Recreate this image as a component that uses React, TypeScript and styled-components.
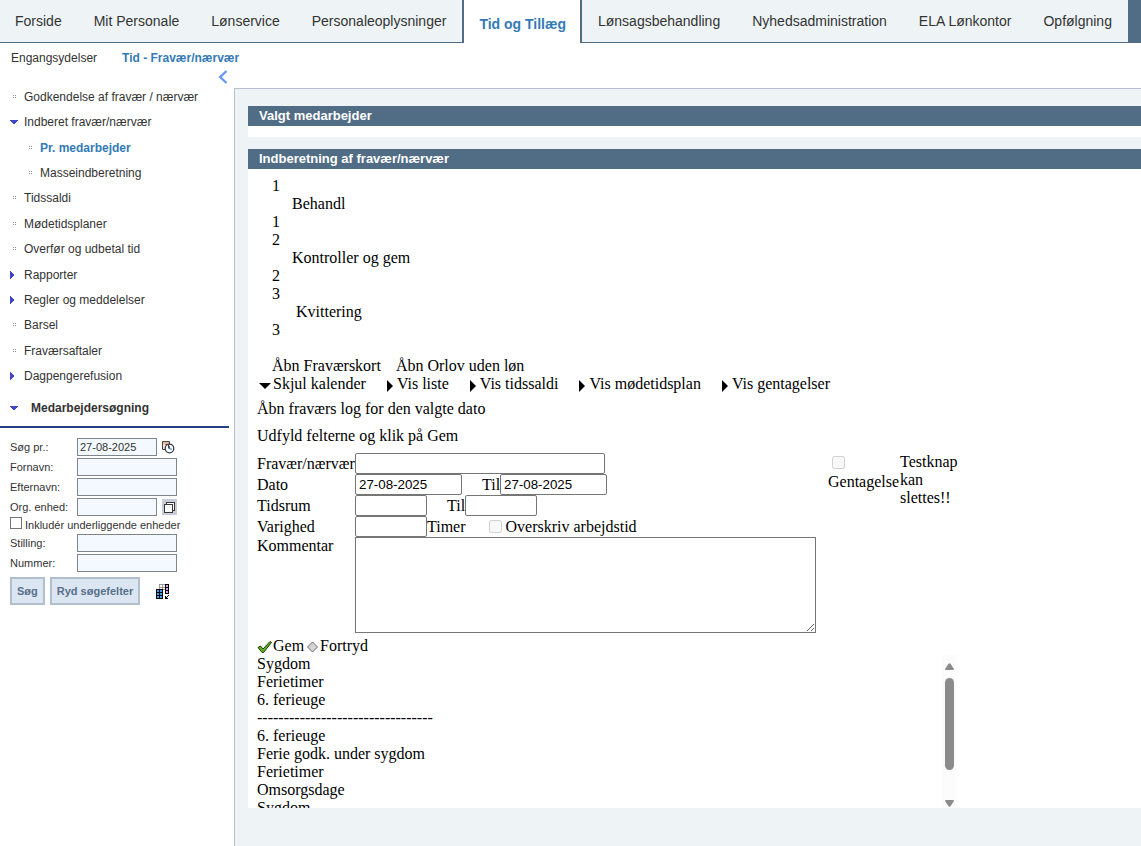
import React from "react";
import styled, { createGlobalStyle, css } from "styled-components";

const slate = "#506d85";
const pale = "#eef3f6";
const link = "#337ab7";
const sans = '"Liberation Sans", Arial, sans-serif';
const serif = '"Liberation Serif", "Times New Roman", serif';

const Global = createGlobalStyle`
  *, *::before, *::after { box-sizing: border-box; }
  body { margin: 0; background: #fff; color: #333; font: 12px/18px ${sans}; }
  a { color: inherit; text-decoration: none; }
  ul, ol { list-style: none; margin: 0; padding: 0; }
  svg { display: block; flex: none; }
  input, textarea, button { margin: 0; }
`;

const Page = styled.div`
  display: flex;
  flex-direction: column;
  min-height: 100vh;
  overflow-x: hidden;
`;

const TopBar = styled.nav`
  display: flex;
  height: 43px;
  background: ${slate};
`;

const Tabs = styled.ul`
  display: flex;
`;

const Tab = styled.li<{ $active?: boolean }>`
  padding: 0 16px;
  border-bottom: 1px solid ${slate};
  background: ${pale};
  font-size: 14px;
  line-height: 42px;
  white-space: nowrap;
  &:first-child {
    padding-left: 15px;
  }
  ${(p) =>
    p.$active &&
    css`
      padding: 3px 14px 0 15px;
      background: #fff;
      color: ${link};
      font-weight: bold;
      border: solid ${slate};
      border-width: 0 2px;
    `}
`;

const SubNav = styled.nav`
  display: flex;
  gap: 25px;
  height: 27px;
  padding: 6px 11px 0;
`;

const SubLink = styled.a<{ $active?: boolean }>`
  ${(p) => p.$active && `color: ${link}; font-weight: bold;`}
`;

const Body = styled.div`
  display: flex;
  flex: 1;
`;

const Sidebar = styled.aside`
  flex: 0 0 234px;
`;

const Collapse = styled.button`
  display: block;
  width: 10px;
  height: 14px;
  margin-left: 218px;
  padding: 0;
  border: 0;
  background: none;
`;

const Menu = styled.ul`
  display: grid;
  grid-auto-rows: 1fr;
  height: 305px;
`;

const MenuItem = styled.li<{ $sub?: boolean; $active?: boolean }>`
  display: flex;
  align-items: center;
  padding-left: ${(p) => (p.$sub ? 26 : 10)}px;
  ${(p) => p.$active && `color: ${link}; font-weight: bold;`}
`;

const Bullet = styled.span`
  width: 14px;
`;

const SearchTitle = styled.h2`
  display: flex;
  align-items: center;
  gap: 13px;
  width: 229px;
  height: 39px;
  margin: 0;
  padding-left: 10px;
  border-bottom: 2px solid #273f85;
  font-size: 12px;
`;

const SearchForm = styled.form`
  padding: 9px 10px;
  font-size: 11px;
  line-height: 16px;
`;

const SearchRow = styled.div`
  display: flex;
  align-items: center;
  height: 20px;
`;

const SearchLabel = styled.label`
  width: 67px;
`;

const SearchInput = styled.input<{ $short?: boolean }>`
  width: ${(p) => (p.$short ? 80 : 100)}px;
  height: 18px;
  padding: 1px 2px;
  border: 1px solid #7e858c;
  background: #f4f8ff;
  color: #333;
  font: 11px ${sans};
`;

const IconButton = styled.button<{ $filled?: boolean }>`
  display: grid;
  place-items: center;
  width: ${(p) => (p.$filled ? 15 : 13)}px;
  height: 16px;
  margin-left: 5px;
  padding: 0;
  border: 0;
  background: ${(p) => (p.$filled ? "#c8cddb" : "none")};
`;

const CheckRow = styled.label`
  display: flex;
  align-items: flex-start;
  gap: 3px;
  height: 16px;
  white-space: nowrap;
`;

const SquareCheck = styled.input`
  appearance: none;
  flex: none;
  width: 12px;
  height: 12px;
  border: 1px solid #767676;
  background: #fff;
`;

const Buttons = styled.div`
  display: flex;
  align-items: center;
  gap: 5px;
  padding-top: 4px;
`;

const Button = styled.button`
  height: 28px;
  padding: 0 5px;
  border: 2px solid #b2bfce;
  background: #dce5f2;
  color: #587089;
  font: bold 11px ${sans};
`;

const GridButton = styled(IconButton)`
  width: 14px;
  margin-left: 11px;
`;

const Main = styled.main`
  flex: 1;
  min-width: 0;
  margin-top: 18px;
  padding: 17px 0 38px 13px;
  border: solid #b8bfcf;
  border-width: 1px 0 0 1px;
  background: ${pale};
`;

const Panel = styled.section`
  background: #fff;
  & + & {
    margin-top: 12px;
  }
`;

const PanelTitle = styled.h2`
  margin: 0;
  padding: 0 11px;
  background: ${slate};
  color: #fff;
  font: bold 13px/20px ${sans};
`;

const EmptyBody = styled.div`
  height: 11px;
`;

const Content = styled.div`
  padding: 8px 9px 0;
  color: #000;
  font: 16px/18px ${serif};
`;

const Steps = styled.ol`
  padding: 0 0 18px 15px;
`;

const StepName = styled.div<{ $last?: boolean }>`
  padding-left: ${(p) => (p.$last ? 24 : 20)}px;
`;

const CardLinks = styled.div`
  display: flex;
  gap: 15px;
  padding-left: 15px;
`;

const Toggles = styled.div`
  display: flex;
  gap: 21px;
  padding-left: 2px;
`;

const Toggle = styled.a<{ $open?: boolean }>`
  display: flex;
  align-items: center;
  gap: ${(p) => (p.$open ? 2 : 4)}px;
  svg {
    margin-top: 3px;
  }
`;

const Line = styled.p<{ $gap: number }>`
  margin: ${(p) => p.$gap}px 0 0;
`;

const FormArea = styled.form`
  display: flex;
  width: 700px;
  margin-top: 8px;
`;

const Fields = styled.div`
  flex: 1;
`;

const Row = styled.div`
  display: flex;
  align-items: center;
  min-height: 21px;
`;

const CommentRow = styled(Row)`
  align-items: flex-start;
`;

const Label = styled.label`
  width: 98px;
  white-space: nowrap;
`;

const Till = styled.label`
  margin-left: 20px;
  width: 18px;
`;

const sizes = { long: 250, date: 107, time: 72 };

const Field = styled.input<{ $size: keyof typeof sizes }>`
  width: ${(p) => sizes[p.$size]}px;
  height: 21px;
  padding: 1px 3px;
  border: 1px solid #767676;
  border-radius: 2px;
  background: #fff;
  color: #000;
  font-family: ${sans};
`;

const Comment = styled.textarea`
  display: block;
  width: 461px;
  height: 96px;
  border: 1px solid #767676;
  background: #fff;
`;

const Override = styled.label`
  display: flex;
  align-items: center;
  gap: 4px;
  margin-left: 23px;
`;

const Repeat = styled.label`
  display: flex;
  flex-direction: column;
  gap: 4px;
  width: 72px;
  padding-top: 3px;
`;

const RoundCheck = styled.input`
  width: 13px;
  height: 13px;
  flex: none;
  ${Repeat} & {
    margin-left: 4px;
  }
`;

const TestNote = styled.div`
  width: 57px;
`;

const Actions = styled.div`
  display: flex;
  margin-top: 4px;
`;

const Action = styled.button`
  display: flex;
  align-items: center;
  padding: 0 1px 0 0;
  border: 0;
  background: none;
  color: #000;
  font: 16px/18px ${serif};
  svg {
    margin-top: 2px;
  }
`;

const ScrollBox = styled.div`
  display: flex;
  justify-content: space-between;
  width: 700px;
  height: 153px;
  overflow: hidden;
`;

const ScrollTrack = styled.div`
  display: flex;
  flex-direction: column;
  align-items: center;
  justify-content: space-between;
  width: 15px;
  padding: 8px 0 1px;
  background: #fcfcfc;
`;

const Thumb = styled.div`
  width: 9px;
  height: 92px;
  margin: 8px 0 auto;
  border-radius: 5px;
  background: #8b8b8b;
`;

type Kind = "dots" | "down" | "right";

const Marker = ({ kind }: { kind: Kind }) =>
  kind === "dots" ? (
    <svg width="9" height="4" viewBox="0 0 9 4" shapeRendering="crispEdges">
      <path d="M3 0h1v1h-1zM5 0h1v1h-1zM3 2h1v1h-1zM5 2h1v1h-1z" fill="#8b8fa8" />
    </svg>
  ) : kind === "down" ? (
    <svg width="8" height="4" viewBox="0 0 8 4" shapeRendering="crispEdges">
      <path d="M0 0h8v1H7v1H6v1H5v1H3V3H2V2H1V1H0z" fill="#4146c9" />
    </svg>
  ) : (
    <svg width="8" height="8" viewBox="0 0 8 8" shapeRendering="crispEdges">
      <path d="M0 0h1v1h1v1h1v1h1v2H3v1H2v1H1v1H0z" fill="#4146c9" />
    </svg>
  );

const BlackArrow = ({ open }: { open?: boolean }) =>
  open ? (
    <svg width="12" height="6" viewBox="0 0 12 6">
      <path d="M0 0h12L6 6z" />
    </svg>
  ) : (
    <svg width="6" height="12" viewBox="0 0 6 12">
      <path d="M0 0v12l6-6z" />
    </svg>
  );

const ScrollArrow = ({ down }: { down?: boolean }) => (
  <svg width="9" height="7" viewBox="0 0 9 7">
    <path
      d={down ? "M.8 0h7.4q1 .3.6 1.3L5.5 6.3q-1 1-2 0L.2 1.3Q-.2.3.8 0z" : "M.8 7h7.4q1-.3.6-1.3L5.5.7q-1-1-2 0L.2 5.7Q-.2 6.7.8 7z"}
      fill="#8b8b8b"
    />
  </svg>
);

const tabs = [
  "Forside",
  "Mit Personale",
  "Lønservice",
  "Personaleoplysninger",
  "Tid og Tillæg",
  "Lønsagsbehandling",
  "Nyhedsadministration",
  "ELA Lønkontor",
  "Opfølgning",
];

const menu: { text: string; kind: Kind; sub?: boolean; active?: boolean }[] = [
  { text: "Godkendelse af fravær / nærvær", kind: "dots" },
  { text: "Indberet fravær/nærvær", kind: "down" },
  { text: "Pr. medarbejder", kind: "dots", sub: true, active: true },
  { text: "Masseindberetning", kind: "dots", sub: true },
  { text: "Tidssaldi", kind: "dots" },
  { text: "Mødetidsplaner", kind: "dots" },
  { text: "Overfør og udbetal tid", kind: "dots" },
  { text: "Rapporter", kind: "right" },
  { text: "Regler og meddelelser", kind: "right" },
  { text: "Barsel", kind: "dots" },
  { text: "Fraværsaftaler", kind: "dots" },
  { text: "Dagpengerefusion", kind: "right" },
];

const steps = ["Behandl", "Kontroller og gem", "Kvittering"];
const toggles = ["Skjul kalender", "Vis liste", "Vis tidssaldi", "Vis mødetidsplan", "Vis gentagelser"];
const absences = [
  "Sygdom",
  "Ferietimer",
  "6. ferieuge",
  "---------------------------------",
  "6. ferieuge",
  "Ferie godk. under sygdom",
  "Ferietimer",
  "Omsorgsdage",
  "Sygdom",
];

const SearchField = ({ id, label, short, value, children }: {
  id: string; label: string; short?: boolean; value?: string; children?: React.ReactNode;
}) => (
  <SearchRow>
    <SearchLabel htmlFor={id}>{label}</SearchLabel>
    <SearchInput id={id} $short={short} defaultValue={value} />
    {children}
  </SearchRow>
);

export default function App() {
  return (
    <Page>
      <Global />
      <TopBar>
        <Tabs>
          {tabs.map((t) => (
            <Tab key={t} $active={t === "Tid og Tillæg"}>
              <a href="#">{t}</a>
            </Tab>
          ))}
        </Tabs>
      </TopBar>
      <SubNav>
        <SubLink href="#">Engangsydelser</SubLink>
        <SubLink href="#" $active>Tid - Fravær/nærvær</SubLink>
      </SubNav>
      <Body>
        <Sidebar>
          <Collapse type="button" aria-label="Skjul menu">
            <svg width="10" height="14" viewBox="0 0 10 14">
              <path d="M8.500 1 2.200 7l6.300 6" fill="none" stroke="#6699f5" strokeWidth="2.400" />
            </svg>
          </Collapse>
          <Menu>
            {menu.map((m) => (
              <MenuItem key={m.text} $sub={m.sub} $active={m.active}>
                <Bullet><Marker kind={m.kind} /></Bullet>
                <a href="#">{m.text}</a>
              </MenuItem>
            ))}
          </Menu>
          <SearchTitle><Marker kind="down" />Medarbejdersøgning</SearchTitle>
          <SearchForm>
            <SearchField id="date" label="Søg pr.:" short value="27-08-2025">
              <IconButton type="button" aria-label="Vælg dato">
                <svg width="13" height="13" viewBox="0 0 13 13">
                  <path d="M.5.500h7v8h-7z" fill="#f6e3d2" stroke="#54403c" />
                  <path d="M1 2h6" stroke="#c39a78" fill="none" />
                  <circle cx="7.500" cy="7.500" r="4.300" fill="#fff" stroke="#2b3350" strokeWidth="1.200" />
                  <path d="M3.500 3.500h3v4" fill="none" stroke="#54403c" />
                  <path d="M7.500 5v3h2.500" fill="none" stroke="#3975b9" />
                </svg>
              </IconButton>
            </SearchField>
            <SearchField id="first" label="Fornavn:" />
            <SearchField id="last" label="Efternavn:" />
            <SearchField id="unit" label="Org. enhed:" short>
              <IconButton type="button" $filled aria-label="Vælg enhed">
                <svg width="11" height="11" viewBox="0 0 11 11" shapeRendering="crispEdges">
                  <path d="M2.500.500h8v8h-8z" fill="#fff" stroke="#3d3833" />
                  <path d="M.5 2.500h8v8h-8z" fill="#fff" stroke="#3d3833" />
                </svg>
              </IconButton>
            </SearchField>
            <CheckRow>
              <SquareCheck type="checkbox" />
              Inkludér underliggende enheder
            </CheckRow>
            <SearchField id="position" label="Stilling:" />
            <SearchField id="number" label="Nummer:" />
            <Buttons>
              <Button type="button">Søg</Button>
              <Button type="button">Ryd søgefelter</Button>
              <GridButton type="button" aria-label="Vis kolonner">
                <svg width="14" height="15" viewBox="0 0 14 15" shapeRendering="crispEdges">
                  <path d="M3 0h7v6H3z" fill="#999" />
                  <path d="M4 1h2v2H4zM7 1h2v2H7zM4 4h2v1H4zM7 4h2v1H7z" fill="#fff" />
                  <path d="M9 0h4v10H9z" />
                  <path d="M10 1h2v2h-2zM10 4h2v2h-2zM10 7h2v2h-2z" fill="#d6a4ec" />
                  <path d="M0 5h7v10H0z" />
                  <path d="M1 6h2v2H1zM4 6h2v2H4zM1 9h2v2H1zM4 9h2v2H4zM1 12h2v2H1zM4 12h2v2H4z" fill="#35a2ff" />
                  <path d="M12 11h1v1h-1zM11 12h1v1h-1zM9 12h1v1h1v1h1v1H9z" />
                </svg>
              </GridButton>
            </Buttons>
          </SearchForm>
        </Sidebar>
        <Main>
          <Panel>
            <PanelTitle>Valgt medarbejder</PanelTitle>
            <EmptyBody />
          </Panel>
          <Panel>
            <PanelTitle>Indberetning af fravær/nærvær</PanelTitle>
            <Content>
              <Steps>
                {steps.map((s, i) => (
                  <li key={s}>
                    <div>{i + 1}</div>
                    <StepName $last={i === 2}>{s}</StepName>
                    <div>{i + 1}</div>
                  </li>
                ))}
              </Steps>
              <CardLinks>
                <a href="#">Åbn Fraværskort</a>
                <a href="#">Åbn Orlov uden løn</a>
              </CardLinks>
              <Toggles>
                {toggles.map((t, i) => (
                  <Toggle key={t} href="#" $open={i === 0}>
                    <BlackArrow open={i === 0} />
                    {t}
                  </Toggle>
                ))}
              </Toggles>
              <Line $gap={7}><a href="#">Åbn fraværs log for den valgte dato</a></Line>
              <Line $gap={9}>Udfyld felterne og klik på Gem</Line>
              <FormArea>
                <Fields>
                  <Row>
                    <Label htmlFor="absence">Fravær/nærvær</Label>
                    <Field id="absence" $size="long" />
                  </Row>
                  <Row>
                    <Label htmlFor="from">Dato</Label>
                    <Field id="from" $size="date" defaultValue="27-08-2025" />
                    <Till htmlFor="to">Til</Till>
                    <Field id="to" $size="date" defaultValue="27-08-2025" />
                  </Row>
                  <Row>
                    <Label htmlFor="start">Tidsrum</Label>
                    <Field id="start" $size="time" />
                    <Till htmlFor="end">Til</Till>
                    <Field id="end" $size="time" />
                  </Row>
                  <Row>
                    <Label htmlFor="duration">Varighed</Label>
                    <Field id="duration" $size="time" />
                    Timer
                    <Override>
                      <RoundCheck type="checkbox" disabled />
                      Overskriv arbejdstid
                    </Override>
                  </Row>
                  <CommentRow>
                    <Label htmlFor="comment">Kommentar</Label>
                    <Comment id="comment" />
                  </CommentRow>
                </Fields>
                <Repeat>
                  <RoundCheck type="checkbox" disabled />
                  Gentagelse
                </Repeat>
                <TestNote>Testknap kan slettes!!</TestNote>
              </FormArea>
              <Actions>
                <Action type="button">
                  <svg width="16" height="14" viewBox="0 0 16 14">
                    <path d="M1 7.500 3.500 6 6 9 13 1.500l1.500 1L6.500 12.500H5z" fill="#62b01e" stroke="#1d3a0c" />
                  </svg>
                  Gem
                </Action>
                <Action type="button">
                  <svg width="15" height="12" viewBox="0 0 15 12">
                    <path d="M2.500 6 7.500 1l5 5-5 5z" fill="#d4d4d4" stroke="#6b6b6b" />
                  </svg>
                  Fortryd
                </Action>
              </Actions>
              <ScrollBox>
                <ul>
                  {absences.map((a, i) => (
                    <li key={i}>{a}</li>
                  ))}
                </ul>
                <ScrollTrack>
                  <ScrollArrow />
                  <Thumb />
                  <ScrollArrow down />
                </ScrollTrack>
              </ScrollBox>
            </Content>
          </Panel>
        </Main>
      </Body>
    </Page>
  );
}
